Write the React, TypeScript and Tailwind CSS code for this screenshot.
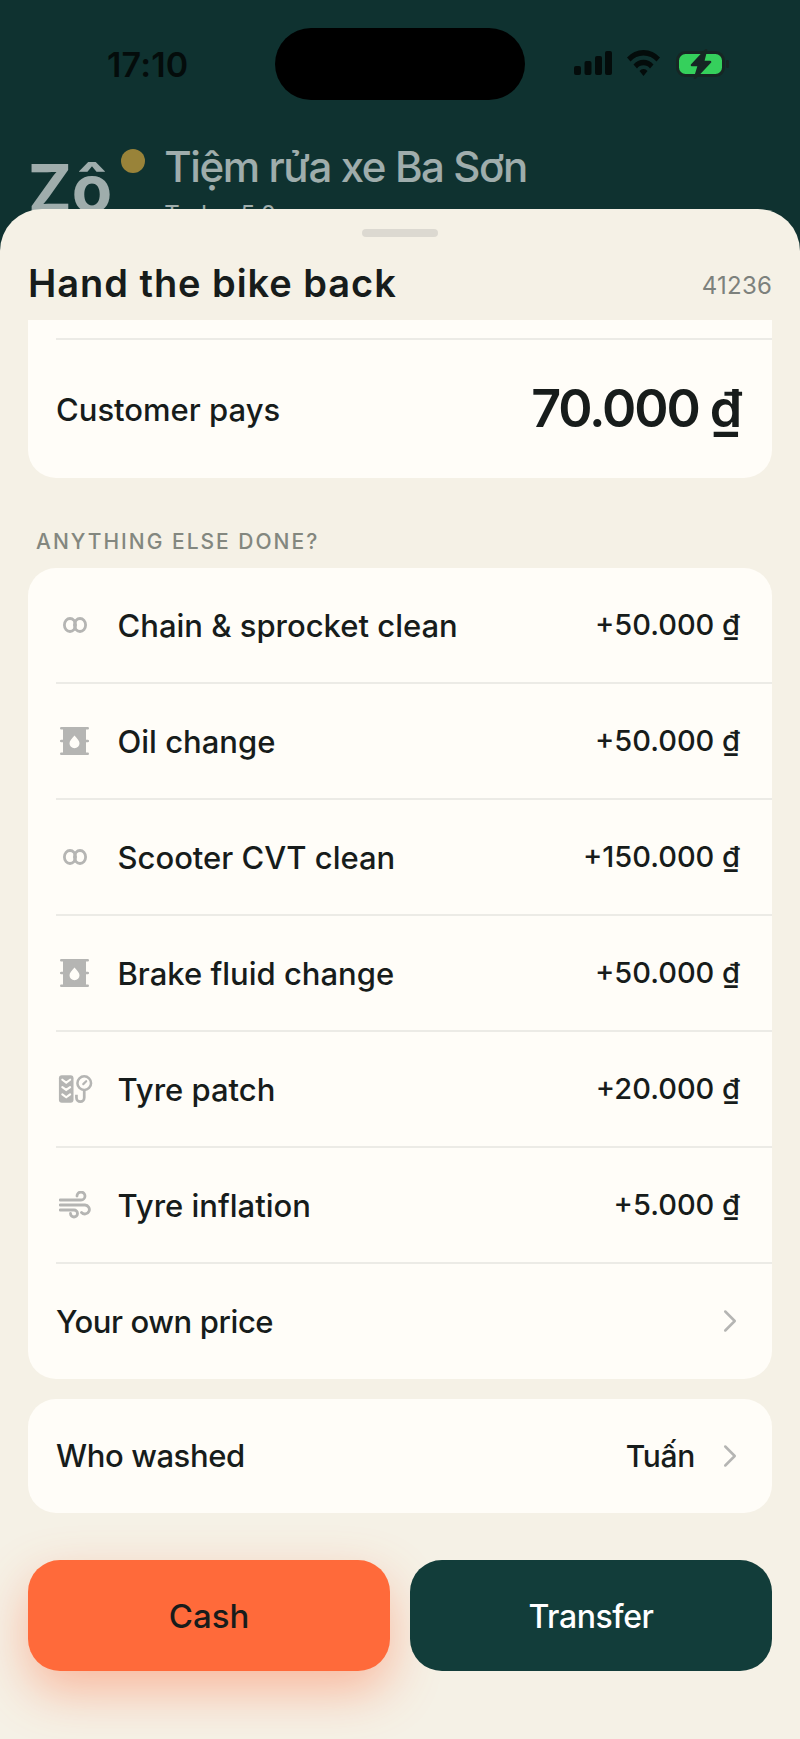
import { ChevronRight } from 'lucide-react';

const font = { fontFamily: 'Inter, "Noto Sans", sans-serif' };

function InfinityIcon() {
  return (
    <svg width="24" height="18" viewBox="0 0 24 18" fill="none" stroke="#b5b5b3" strokeWidth="2.800">
      <ellipse cx="7" cy="9" rx="5.600" ry="6.500" />
      <ellipse cx="17" cy="9" rx="5.600" ry="6.500" />
    </svg>
  );
}

function BarrelIcon() {
  return (
    <svg width="29" height="28" viewBox="0 0 29 28">
      <path
        fill="#b5b5b3"
        d="M1.200 0h26.600a1.200 1.200 0 0 1 0 2.400H26v10.300h1.800a1.300 1.300 0 0 1 0 2.600H26v10.300h1.800a1.200 1.200 0 0 1 0 2.400H1.200a1.200 1.200 0 0 1 0-2.400H3V15.300H1.200a1.300 1.300 0 0 1 0-2.600H3V2.400H1.200A1.200 1.200 0 0 1 1.200 0z"
      />
      <path fill="#fffdf8" d="M14.500 8.500c2.800 3.200 5 5.300 5 7.800a5 5 0 0 1-10 0c0-2.500 2.200-4.600 5-7.800z" />
    </svg>
  );
}

function TyreIcon() {
  return (
    <svg width="38" height="30" viewBox="-3 0 38 30" fill="none">
      <rect x="0" y="1" width="15" height="28" rx="3" fill="#b5b5b3" />
      <path
        stroke="#fffdf8"
        strokeWidth="2.200"
        strokeLinecap="round"
        d="M3.500 5.500l4 3 4-3M3.500 13l4 3 4-3M3.500 20.500l4 3 4-3"
      />
      <circle cx="26" cy="9" r="7" stroke="#b5b5b3" strokeWidth="2.600" />
      <path stroke="#b5b5b3" strokeWidth="2.200" strokeLinecap="round" d="M25 10l3-3" />
      <path stroke="#b5b5b3" strokeWidth="2.800" d="M26 16v8a4 4 0 0 1-8 0v-3" />
    </svg>
  );
}

function WindIcon() {
  return (
    <svg width="32" height="28" viewBox="0 0 32 28" fill="none" stroke="#b5b5b3" strokeWidth="2.800" strokeLinecap="round">
      <path d="M1 9h21a4 4 0 1 0-4-4" />
      <path d="M1 14h25a4.500 4.500 0 1 1-3.500 7.500" />
      <path d="M1 19h14a3.500 3.500 0 1 1-3.500 3.500" />
    </svg>
  );
}

const services = [
  { name: 'Chain & sprocket clean', price: '+50.000 ₫', icon: <InfinityIcon /> },
  { name: 'Oil change', price: '+50.000 ₫', icon: <BarrelIcon /> },
  { name: 'Scooter CVT clean', price: '+150.000 ₫', icon: <InfinityIcon /> },
  { name: 'Brake fluid change', price: '+50.000 ₫', icon: <BarrelIcon /> },
  { name: 'Tyre patch', price: '+20.000 ₫', icon: <TyreIcon /> },
  { name: 'Tyre inflation', price: '+5.000 ₫', icon: <WindIcon /> },
];

export default function App() {
  return (
    <div style={font} className="relative h-[1739px] w-[800px] overflow-hidden bg-[#0f3230]">
      {/* status bar */}
      <div className="flex h-[100px] items-start pt-[28px]">
        <div className="flex h-[72px] w-[275px] items-center pl-[107px] text-[34px] font-semibold tracking-[0.2px] text-[#040c0b]">
          17:10
        </div>
        <div className="h-[72px] w-[250px] rounded-[36px] bg-black" />
        <div className="flex h-[72px] items-center pl-[49px]">
          <svg width="158" height="30" viewBox="0 0 158 30">
            <rect x="0" y="17" width="7" height="9" rx="2" fill="#040c0b" />
            <rect x="10.500" y="12" width="7" height="14" rx="2" fill="#040c0b" />
            <rect x="21" y="7" width="7" height="19" rx="2" fill="#040c0b" />
            <rect x="31" y="2" width="7" height="24" rx="2" fill="#040c0b" />
            <path d="M53 8.500a22 22 0 0 1 33 0l-3.500 4a17 17 0 0 0-26 0z" fill="#040c0b" />
            <path d="M59.500 15.500a13 13 0 0 1 20 0l-3.500 4a8 8 0 0 0-13 0z" fill="#040c0b" />
            <path d="M65.500 22a5 5 0 0 1 8 0l-4 5z" fill="#040c0b" />
            <rect x="103.500" y="3.500" width="46" height="23" rx="8" fill="#35d05c" stroke="#162624" strokeWidth="3" />
            <path d="M132 1l-14 15h7l-4 13 15-16h-7z" fill="#162624" stroke="#162624" strokeWidth="2.500" strokeLinejoin="round" />
            <rect x="152" y="11" width="3" height="8" rx="1.200" fill="#162624" />
          </svg>
        </div>
      </div>

      {/* dimmed page behind the sheet */}
      <div className="flex pl-[28px] pt-[43px] opacity-60">
        <span className="text-[66px] font-bold leading-[90px] text-white">Zô</span>
        <span className="ml-[9px] mt-[6px] h-[24px] w-[24px] rounded-full bg-[#f5b93f]" />
        <div className="ml-[19px] flex flex-col">
          <span className="text-[42px] font-medium leading-[48px] tracking-[-1.400px] text-white">Tiệm rửa xe Ba Sơn</span>
          <span className="mt-[6px] text-[24px] text-white">Today 5.0</span>
        </div>
      </div>

      {/* bottom sheet */}
      <div className="absolute inset-x-0 bottom-0 top-[209px] rounded-t-[42px] bg-[#f5f1e6]">
        <div className="mx-auto mt-[20px] h-[8px] w-[76px] rounded-full bg-[#dcd9d1]" />
        <div className="flex h-[83px] items-center justify-between px-[28px] pt-[9px]">
          <h1 className="text-[38px] font-semibold tracking-[0.95px] text-[#171c1b]">Hand the bike back</h1>
          <span className="pt-[6px] text-[24px] tracking-[0.2px] text-[#7d817d]">41236</span>
        </div>

        <div className="mx-[28px] rounded-b-[28px] bg-[#fffdf8] pt-[18px]">
          <div className="ml-[28px] h-[2px] bg-[#ecebe6]" />
          <div className="flex h-[138px] items-center justify-between pl-[28px] pr-[32px]">
            <span className="pt-[2px] text-[31px] font-medium text-[#171c1b]">Customer pays</span>
            <span className="text-[52px] font-semibold tracking-[-2.100px] text-[#171c1b]">70.000 ₫</span>
          </div>
        </div>

        <div className="mt-[48px] pl-[36px] text-[21px] font-medium tracking-[2px] text-[#83877f]">ANYTHING ELSE DONE?</div>

        <div className="mx-[28px] mt-[10px] rounded-[28px] bg-[#fffdf8]">
          {services.map((s) => (
            <div key={s.name} className="ml-[28px] flex h-[116px] items-center justify-between border-b-2 border-[#ecebe6] pr-[32px]">
              <div className="flex items-center">
                <div className="flex w-[37px] justify-center">{s.icon}</div>
                <span className="ml-[24.500px] pt-[4px] text-[31px] font-medium text-[#171c1b]">{s.name}</span>
              </div>
              <span className="pt-[1px] text-[29px] font-medium text-[#171c1b]">{s.price}</span>
            </div>
          ))}
          <div className="ml-[28px] flex h-[115px] items-center justify-between pr-[23px]">
            <span className="pt-[2px] text-[31px] font-medium tracking-[-0.4px] text-[#171c1b]">Your own price</span>
            <ChevronRight size={38} color="#b5b5b3" strokeWidth={1.600} />
          </div>
        </div>

        <div className="mx-[28px] mt-[20px] flex h-[114px] items-center justify-between rounded-[28px] bg-[#fffdf8] pl-[28px] pr-[23px]">
          <span className="pt-[2px] text-[31px] font-medium tracking-[-0.4px] text-[#171c1b]">Who washed</span>
          <div className="flex items-center gap-[16px]">
            <span className="pt-[2px] text-[30px] font-medium tracking-[-0.3px] text-[#171c1b]">Tuấn</span>
            <ChevronRight size={38} color="#b5b5b3" strokeWidth={1.600} />
          </div>
        </div>

        <div className="mx-[28px] mt-[47px] grid grid-cols-2 gap-[20px]">
          <button className="h-[111px] rounded-[32px] bg-[#ff6a3a] pt-[3px] text-[33px] font-medium text-[#171c1b] shadow-[0_20px_50px_rgba(255,106,58,0.42)]">
            Cash
          </button>
          <button className="h-[111px] rounded-[32px] bg-[#123d3a] pt-[3px] text-[32px] font-medium tracking-[-0.4px] text-white">
            Transfer
          </button>
        </div>
      </div>
    </div>
  );
}
